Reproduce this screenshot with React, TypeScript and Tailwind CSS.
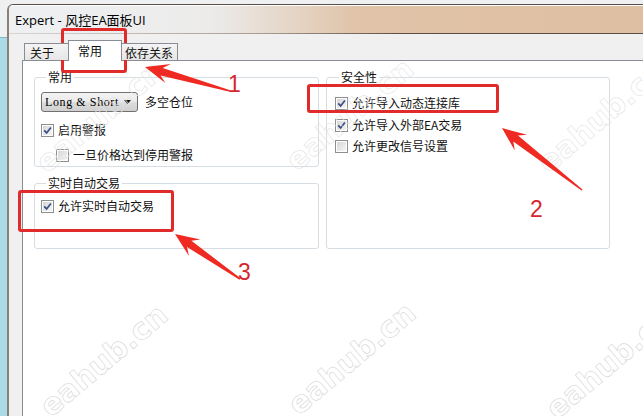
import React from 'react';

type Pt = [number, number];

// tapered annotation arrow: tip, tail, head length, head half-width, neck half-width
const arrowPoints = (tip: Pt, tail: Pt, headLen: number, headW: number, neckW: number) => {
  const dx = tail[0] - tip[0];
  const dy = tail[1] - tip[1];
  const len = Math.hypot(dx, dy);
  const ux = dx / len;
  const uy = dy / len;
  const px = -uy;
  const py = ux;
  const at = (d: number, w: number): Pt => [tip[0] + ux * d + px * w, tip[1] + uy * d + py * w];
  const pts: Pt[] = [
    tip,
    at(headLen, headW),
    at(headLen * 0.72, neckW),
    [tail[0] + px * 0.8, tail[1] + py * 0.8],
    [tail[0] - px * 0.8, tail[1] - py * 0.8],
    at(headLen * 0.72, -neckW),
    at(headLen, -headW),
  ];
  return pts.map((p) => `${p[0].toFixed(1)},${p[1].toFixed(1)}`).join(' ');
};

const CheckBox = ({ checked }: { checked?: boolean }) => (
  <span className="w-[13px] h-[13px] shrink-0 border border-[#8e8f8f] p-[1px] bg-white flex">
    <span className="flex-1 bg-[linear-gradient(135deg,#d6d6d6,#f6f6f6)] flex items-center justify-center">
      {checked && (
        <svg width="9" height="9" viewBox="0 0 9 9">
          <path d="M1.2 4.4 L3.6 6.9 L7.9 1.4" stroke="#3b4f86" strokeWidth="1.7" fill="none" />
        </svg>
      )}
    </span>
  </span>
);

const CheckRow = ({ label, checked, className = '' }: { label: string; checked?: boolean; className?: string }) => (
  <div className={`flex items-center gap-[4px] ${className}`}>
    <CheckBox checked={checked} />
    <span className="leading-[14px]">{label}</span>
  </div>
);

// [x, y, faint]
const watermarks: [number, number, boolean][] = [
  [50, 178, true],
  [300, 176, true],
  [552, 178, true],
  [54, 422, false],
  [302, 420, false],
  [560, 424, false],
];

export default function App() {
  return (
    <div className="relative w-[643px] h-[416px] overflow-hidden bg-[#eef0f1] font-['Noto_Sans_CJK_SC',sans-serif] text-[12px] leading-[14px] text-[#111]">
      <div className="flex h-full pt-[4px]">
        {/* desktop strip on the left */}
        <div className="w-[7px] shrink-0 flex flex-col">
          <div className="h-[34px] bg-[#eef0f1] border-b border-[#7db7c9]" />
          <div className="flex-1 bg-[#aadbe6]" />
        </div>

        {/* window */}
        <div className="flex-1 flex flex-col rounded-tl-[6px] overflow-hidden border-t border-l-2 border-t-[#5b4f48] border-l-[#8b8077]">
          <div className="h-[28px] shrink-0 flex items-center pl-[6px] border-t border-white bg-[linear-gradient(90deg,#eef0f2_0%,#ecebea_32%,#e0c3a8_55%,#dfbfa3_100%)] font-['Open_Sans','Noto_Sans_CJK_SC',sans-serif] text-[13px] text-black">
            Expert - 风控EA面板UI
          </div>
          <div className="h-px shrink-0 bg-[linear-gradient(90deg,#d8d6d4,#a89c92_40%,#5d4e45_62%)]" />

          <div className="flex-1 flex flex-col bg-[#f0f0f0] pl-[13px]">
            {/* tabs */}
            <div className="h-[26px] shrink-0 flex items-end pl-[2px] relative z-10">
              <div className="w-[44px] h-[17px] border-l border-t border-[#898c95] bg-[linear-gradient(#f4f4f4,#e6e6e6)] pl-[5px] pt-[2px] leading-[14px]">
                关于
              </div>
              <div className="w-[54px] h-[21px] -mb-px border-l border-t border-r border-[#898c95] bg-white pl-[9px] pt-[3px] leading-[14px]">
                常用
              </div>
              <div className="w-[56px] h-[17px] border-t border-r border-[#898c95] bg-[linear-gradient(#f4f4f4,#e6e6e6)] pl-[3px] pt-[2px] leading-[14px]">
                依存关系
              </div>
            </div>

            {/* tab page */}
            <div className="flex-1 bg-white border-l border-t border-[#898c95] pl-[11px] pt-[9px] flex gap-[7px]">
              <div className="w-[285px] flex flex-col">
                <fieldset className="h-[97px] border border-[#d6dde3] rounded-[3px] pl-[6px]">
                  <legend className="ml-[5px] px-[2px] leading-[14px]">常用</legend>
                  <div className="mt-[8px] flex items-center">
                    <div className="w-[97px] h-[20px] rounded-[3px] border border-[#707070] bg-[linear-gradient(#f3f3f3,#ebebeb_48%,#dddddd_52%,#d0d0d0)] flex items-center pl-[3px] pr-[6px]">
                      <span className="flex-1 font-['Liberation_Serif',serif] text-[12px] tracking-[0.6px] leading-[14px] text-black">
                        Long &amp; Short
                      </span>
                      <svg width="7" height="4" viewBox="0 0 7 4">
                        <path d="M0 0 H7 L3.5 4 Z" fill="#111" />
                      </svg>
                    </div>
                    <span className="ml-[7px]">多空仓位</span>
                  </div>
                  <CheckRow className="mt-[11px]" label="启用警报" checked />
                  <CheckRow className="mt-[11px] pl-[15px]" label="一旦价格达到停用警报" />
                </fieldset>

                <fieldset className="mt-[9px] h-[73px] border border-[#d6dde3] rounded-[3px] pl-[6px]">
                  <legend className="ml-[5px] px-[2px] leading-[14px]">实时自动交易</legend>
                  <CheckRow className="mt-[9px]" label="允许实时自动交易" checked />
                </fieldset>
              </div>

              <fieldset className="w-[284px] h-[179px] border border-[#d6dde3] rounded-[3px] pl-[8px]">
                <legend className="ml-[4px] px-[2px] leading-[14px]">安全性</legend>
                <CheckRow className="mt-[12px]" label="允许导入动态连接库" checked />
                <CheckRow className="mt-[8px]" label="允许导入外部EA交易" checked />
                <CheckRow className="mt-[7px]" label="允许更改信号设置" />
              </fieldset>
            </div>
          </div>
        </div>
      </div>

      {/* watermarks */}
      {watermarks.map(([x, y, faint], i) => (
        <span
          key={i}
          className={`absolute pointer-events-none origin-bottom-left -rotate-[40deg] font-['DejaVu_Sans',sans-serif] font-bold text-[30px] leading-[30px] text-transparent whitespace-nowrap ${
            faint ? '[-webkit-text-stroke:0.6px_#e3e3e3]' : '[-webkit-text-stroke:0.6px_#d4d4d4]'
          }`}
          style={{ left: x, top: y - 30 }}
        >
          eahub.cn
        </span>
      ))}

      {/* annotations */}
      <div className="absolute left-[61px] top-[28px] w-[66px] h-[45px] border-[3px] border-[#e12a2a] rounded-[3px] pointer-events-none" />
      <div className="absolute left-[307px] top-[84px] w-[192px] h-[29px] border-[3px] border-[#e12a2a] rounded-[3px] pointer-events-none" />
      <div className="absolute left-[18px] top-[190px] w-[156px] h-[42px] border-[3px] border-[#e12a2a] rounded-[3px] pointer-events-none" />

      <svg className="absolute inset-0 pointer-events-none" width="643" height="416" viewBox="0 0 643 416">
        <polygon points={arrowPoints([145, 67], [230, 91], 24, 10, 3.8)} fill="#ee2a22" />
        <polygon points={arrowPoints([502, 128], [582, 190], 24, 10, 3.8)} fill="#ee2a22" />
        <polygon points={arrowPoints([175, 234], [240, 279], 24, 10, 3.8)} fill="#ee2a22" />
      </svg>

      <span className="absolute left-[228px] top-[72px] font-['Liberation_Sans',sans-serif] text-[23px] leading-[24px] text-[#d6262f]">1</span>
      <span className="absolute left-[530px] top-[197px] font-['Liberation_Sans',sans-serif] text-[23px] leading-[24px] text-[#d6262f]">2</span>
      <span className="absolute left-[238px] top-[260px] font-['Liberation_Sans',sans-serif] text-[23px] leading-[24px] text-[#d6262f]">3</span>
    </div>
  );
}
